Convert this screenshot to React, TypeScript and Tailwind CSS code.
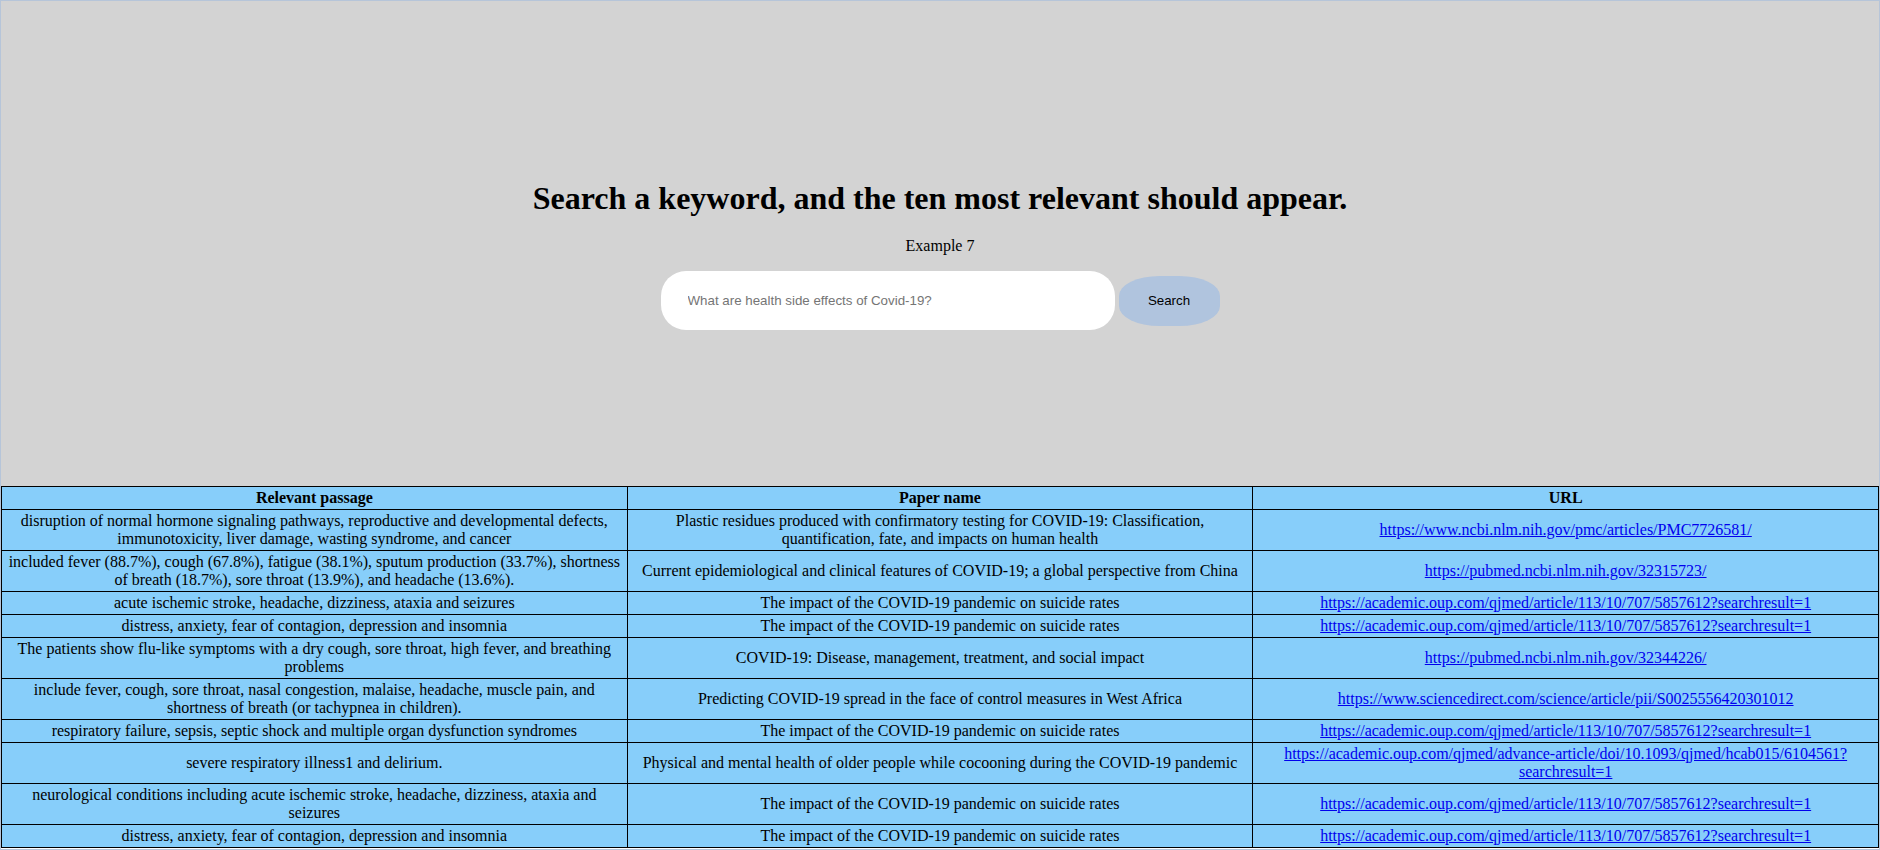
const rows = [
  {
    passage:
      "disruption of normal hormone signaling pathways, reproductive and developmental defects, immunotoxicity, liver damage, wasting syndrome, and cancer",
    paper:
      "Plastic residues produced with confirmatory testing for COVID-19: Classification, quantification, fate, and impacts on human health",
    url: "https://www.ncbi.nlm.nih.gov/pmc/articles/PMC7726581/",
  },
  {
    passage:
      "included fever (88.7%), cough (67.8%), fatigue (38.1%), sputum production (33.7%), shortness of breath (18.7%), sore throat (13.9%), and headache (13.6%).",
    paper:
      "Current epidemiological and clinical features of COVID-19; a global perspective from China",
    url: "https://pubmed.ncbi.nlm.nih.gov/32315723/",
  },
  {
    passage: "acute ischemic stroke, headache, dizziness, ataxia and seizures",
    paper: "The impact of the COVID-19 pandemic on suicide rates",
    url: "https://academic.oup.com/qjmed/article/113/10/707/5857612?searchresult=1",
  },
  {
    passage: "distress, anxiety, fear of contagion, depression and insomnia",
    paper: "The impact of the COVID-19 pandemic on suicide rates",
    url: "https://academic.oup.com/qjmed/article/113/10/707/5857612?searchresult=1",
  },
  {
    passage:
      "The patients show flu-like symptoms with a dry cough, sore throat, high fever, and breathing problems",
    paper: "COVID-19: Disease, management, treatment, and social impact",
    url: "https://pubmed.ncbi.nlm.nih.gov/32344226/",
  },
  {
    passage:
      "include fever, cough, sore throat, nasal congestion, malaise, headache, muscle pain, and shortness of breath (or tachypnea in children).",
    paper: "Predicting COVID-19 spread in the face of control measures in West Africa",
    url: "https://www.sciencedirect.com/science/article/pii/S0025556420301012",
  },
  {
    passage: "respiratory failure, sepsis, septic shock and multiple organ dysfunction syndromes",
    paper: "The impact of the COVID-19 pandemic on suicide rates",
    url: "https://academic.oup.com/qjmed/article/113/10/707/5857612?searchresult=1",
  },
  {
    passage: "severe respiratory illness1 and delirium.",
    paper:
      "Physical and mental health of older people while cocooning during the COVID-19 pandemic",
    url: "https://academic.oup.com/qjmed/advance-article/doi/10.1093/qjmed/hcab015/6104561?searchresult=1",
  },
  {
    passage:
      "neurological conditions including acute ischemic stroke, headache, dizziness, ataxia and seizures",
    paper: "The impact of the COVID-19 pandemic on suicide rates",
    url: "https://academic.oup.com/qjmed/article/113/10/707/5857612?searchresult=1",
  },
  {
    passage: "distress, anxiety, fear of contagion, depression and insomnia",
    paper: "The impact of the COVID-19 pandemic on suicide rates",
    url: "https://academic.oup.com/qjmed/article/113/10/707/5857612?searchresult=1",
  },
];

const cell = "border border-black px-[4px] py-[2px] text-center align-middle";

const App = () => {
  return (
    <main className="min-h-screen border border-[#b6c5d9] bg-white font-['Liberation_Serif','Times_New_Roman',serif] text-[16px] text-black leading-[1.15]">
      <section className="h-[485px] bg-[#d3d3d3] flex flex-col items-center pt-[179px]">
        <h1 className="text-[32px] font-bold leading-[1.15]">
          Search a keyword, and the ten most relevant should appear.
        </h1>
        <p className="mt-[20px]">Example 7</p>
        <div className="mt-[16px] flex items-center gap-[4px]">
          <input
            type="text"
            placeholder="What are health side effects of Covid-19?"
            className="w-[454px] h-[59px] bg-white rounded-[25px] border-0 outline-none pl-[27px] font-['Liberation_Sans',Arial,sans-serif] text-[13.33px] placeholder:text-[#757575]"
          />
          <button className="w-[101px] h-[50px] bg-[#b0c4de] rounded-[40%] font-['Liberation_Sans',Arial,sans-serif] text-[13.33px] text-black">
            Search
          </button>
        </div>
      </section>
      <table className="w-full table-fixed border-collapse bg-[#87cefa] leading-[18px]">
        <thead>
          <tr>
            <th className={cell + " font-bold"}>Relevant passage</th>
            <th className={cell + " font-bold"}>Paper name</th>
            <th className={cell + " font-bold"}>URL</th>
          </tr>
        </thead>
        <tbody>
          {rows.map((r, i) => (
            <tr key={i}>
              <td className={cell}>{r.passage}</td>
              <td className={cell}>{r.paper}</td>
              <td className={cell + " break-words"}>
                <a href={r.url} className="text-[#0000ee] underline">
                  {r.url}
                </a>
              </td>
            </tr>
          ))}
        </tbody>
      </table>
    </main>
  );
};

export default App;
